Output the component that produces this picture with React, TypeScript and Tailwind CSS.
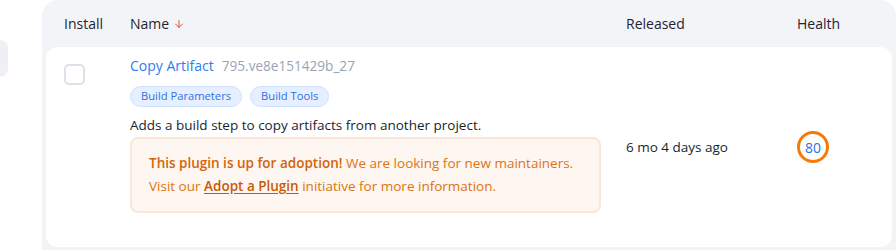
import { ArrowDown } from "lucide-react";

const font = { fontFamily: '"Open Sans", "Noto Sans", sans-serif' };

function Tag({ label }: { label: string }) {
  return (
    <span className="flex h-[21px] items-center rounded-full border border-[#cfe0fd] bg-[#e6efff] px-[10px] text-[11.2px] text-[#2f6fe4]">
      {label}
    </span>
  );
}

function HealthScore({ value }: { value: number }) {
  return (
    <div className="flex size-[32px] items-center justify-center rounded-full border-[3px] border-[#f57a0c] text-[14px] font-medium text-[#2f6fe4]">
      {value}
    </div>
  );
}

export default function App() {
  return (
    <div className="relative h-[250px] w-[896px] overflow-hidden bg-white" style={font}>
      {/* sidebar item peeking in from the left */}
      <div className="absolute left-0 top-[40px] h-[37px] w-[8px] rounded-r-[8px] bg-[#eef0f4]" />

      <div className="ml-[42px] h-full rounded-tl-[16px] rounded-tr-[16px] bg-[#f3f4f8] pl-[4px] pr-[4px]">
        <div className="grid h-[47px] grid-cols-[66px_496px_171px_1fr] items-center pl-[18px] text-[14px] font-medium text-[#1f2430]">
          <span>Install</span>
          <span className="flex items-center gap-[4px]">
            Name <ArrowDown className="size-[12px] text-[#e4572e]" strokeWidth={2} />
          </span>
          <span>Released</span>
          <span>Health</span>
        </div>

        <div className="grid h-[200px] grid-cols-[66px_496px_171px_1fr] rounded-[12px] bg-white pl-[18px]">
          <div className="pt-[17px]">
            <div className="size-[21px] rounded-[5px] border-2 border-[#dde1e8] bg-white" />
          </div>

          <div className="pt-[9px]">
            <div className="flex items-baseline gap-[8px] text-[14px] leading-[20px]">
              <span className="text-[#2f7df0]">Copy Artifact</span>
              <span className="text-[13.6px] text-[#9ba3b4]">795.ve8e151429b_27</span>
            </div>
            <div className="mt-[10px] flex gap-[8px]">
              <Tag label="Build Parameters" />
              <Tag label="Build Tools" />
            </div>
            <p className="mt-[8px] text-[13.5px] leading-[20px] text-[#1a1f2c]">
              Adds a build step to copy artifacts from another project.
            </p>
            <div className="mt-[2px] w-[471px] rounded-[8px] border-2 border-[#fbe6d8] bg-[#fdf6f1] px-[17px] py-[13px] text-[13.5px] leading-[23px] text-[#dc7412]">
              <span className="font-[550] text-[#d3640a]">This plugin is up for adoption!</span> We are looking for new
              maintainers.
              <br />
              Visit our{" "}
              <a className="font-[550] text-[#c85a06] underline underline-offset-2">Adopt a Plugin</a> initiative for
              more information.
            </div>
          </div>

          <div className="self-center text-[13.5px] text-[#1a1f2c]">6 mo 4 days ago</div>

          <div className="self-center">
            <HealthScore value={80} />
          </div>
        </div>
      </div>
    </div>
  );
}
